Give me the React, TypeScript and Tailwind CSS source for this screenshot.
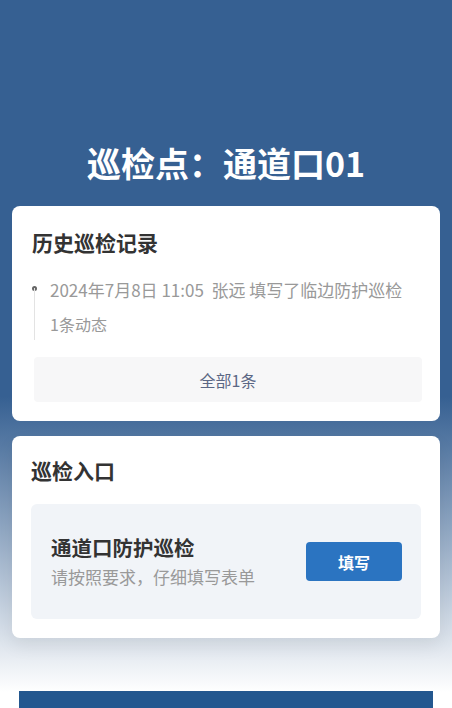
const font = { fontFamily: '"Noto Sans CJK SC", "Noto Sans", sans-serif' }

function HistoryCard() {
  return (
    <section className="mx-3 rounded-lg bg-white px-5 pb-[19px] pt-[22px]">
      <h2 className="text-[21px] font-bold leading-[28px] text-[#333]">历史巡检记录</h2>
      <div className="mt-[20px] flex">
        <div className="relative ml-[1px] w-[3px]">
          <span className="absolute left-0 top-[10px] h-[5px] w-[5px] -translate-x-[1px] rounded-full bg-[#666]" />
          <span className="absolute left-[1px] top-[12px] h-[52px] w-px bg-[#e3e3e3]" />
        </div>
        <div className="ml-[14px] text-[#999]">
          <p className="text-[17px] leading-[28px]">2024年7月8日 11:05&nbsp; 张远 填写了临边防护巡检</p>
          <p className="mt-[8px] text-[16px] leading-[24px]">1条动态</p>
        </div>
      </div>
      <button
        type="button"
        className="ml-[2px] mt-[21px] flex h-[45px] w-full items-center justify-center rounded bg-[#f7f7f8] text-[16px] text-[#5b6785]"
      >
        全部1条
      </button>
    </section>
  )
}

function EntryCard() {
  return (
    <section className="mx-3 mt-[15px] rounded-lg bg-white px-[19px] pb-[19px] pt-[20px] shadow-[0_8px_18px_rgba(0,0,0,0.07)]">
      <h2 className="text-[21px] font-bold leading-[28px] text-[#333]">巡检入口</h2>
      <div className="mt-[20px] flex h-[115px] items-center justify-between rounded-md bg-[#f1f4f8] pl-5 pr-[19px]">
        <div>
          <p className="text-[20.5px] font-bold leading-[28px] text-[#333]">通道口防护巡检</p>
          <p className="mt-[2px] text-[17px] leading-[28px] text-[#999]">请按照要求，仔细填写表单</p>
        </div>
        <button
          type="button"
          className="h-[39px] w-[96px] rounded-[4px] bg-[#2b74c1] text-[16px] font-bold text-white"
        >
          填写
        </button>
      </div>
    </section>
  )
}

export default function App() {
  return (
    <div
      style={font}
      className="flex min-h-[708px] flex-col bg-[linear-gradient(to_bottom,#366092_0%,#366092_55%,#ffffff_96%)]"
    >
      <h1 className="pt-[143px] text-center text-[34px] font-bold leading-[40px] text-white">巡检点：通道口01</h1>
      <div className="mt-[23px]">
        <HistoryCard />
        <EntryCard />
      </div>
      <div className="mx-[19px] mt-[53px] h-[30px] bg-[#23578f]" />
    </div>
  )
}
